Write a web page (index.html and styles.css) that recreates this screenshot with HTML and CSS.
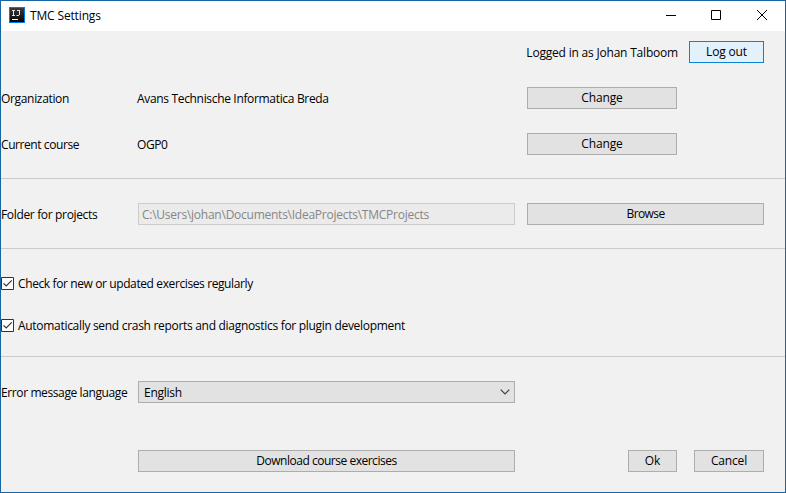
FILE: index.html
```
<!DOCTYPE html>
<html lang="en">
<head>
<meta charset="utf-8">
<title>TMC Settings</title>
<link rel="stylesheet" href="styles.css">
</head>
<body>
<div class="window">
  <header class="titlebar">
    <svg class="app-icon" width="16" height="16" viewBox="0 0 16 16">
      <defs><linearGradient id="g" x1="0" y1="0" x2="0" y2="1"><stop offset="0" stop-color="#3a3a3a"/><stop offset="1" stop-color="#050505"/></linearGradient></defs>
      <rect width="16" height="16" fill="#0878e0"/>
      <rect x="1" y="1" width="14" height="14" fill="url(#g)"/>
      <path d="M3 3.500h3M4.500 3v6M3 8.500h3M8 3.500h3M10.500 3v5M7.500 8.500h2.500" stroke="#e4e4e4" fill="none"/>
      <path d="M3 12.500h6" stroke="#fff"/>
    </svg>
    <h1 class="title"><span class="t-title">TMC Settings</span></h1>
    <div class="controls">
      <svg width="46" height="29" viewBox="0 0 46 29"><path d="M19 14.500h10" stroke="#000"/></svg>
      <svg width="46" height="29" viewBox="0 0 46 29"><path d="M18.500 9.500h9v9h-9z" stroke="#000" fill="none"/></svg>
      <svg width="46" height="29" viewBox="0 0 46 29"><path d="M18 9l10 10M28 9l-10 10" stroke="#000" fill="none"/></svg>
    </div>
  </header>
  <main class="content">
    <section class="account">
      <div class="session"><span class="t-session">Logged in as Johan Talboom</span><button class="button focused logout"><span class="t-logout">Log out</span></button></div>
      <div class="row"><span class="label"><span class="t-org">Organization</span></span><span class="value"><span class="t-avans">Avans Technische Informatica Breda</span></span><button class="button change"><span class="t-change">Change</span></button></div>
      <div class="row"><span class="label"><span class="t-course">Current course</span></span><span class="value"><span class="t-ogp">OGP0</span></span><button class="button change"><span class="t-change">Change</span></button></div>
    </section>
    <section class="folder">
      <div class="row"><span class="label"><span class="t-folder">Folder for projects</span></span><div class="field"><span class="t-path">C:\Users\johan\Documents\IdeaProjects\TMCProjects</span></div><button class="button browse"><span class="t-browse">Browse</span></button></div>
    </section>
    <section class="options">
      <label class="check"><svg width="13" height="13" viewBox="0 0 13 13"><path d="M.5.5h12v12H.5z" fill="#fff" stroke="#333"/><path d="M2.500 6.300l2.700 2.700L10.800 3.400" fill="none" stroke="#333" stroke-width="1.200"/></svg><span class="t-check">Check for new or updated exercises regularly</span></label>
      <label class="check"><svg width="13" height="13" viewBox="0 0 13 13"><path d="M.5.5h12v12H.5z" fill="#fff" stroke="#333"/><path d="M2.500 6.300l2.700 2.700L10.800 3.400" fill="none" stroke="#333" stroke-width="1.200"/></svg><span class="t-auto">Automatically send crash reports and diagnostics for plugin development</span></label>
    </section>
    <section class="bottom">
      <div class="row"><span class="label"><span class="t-error">Error message language</span></span><div class="combo"><span class="t-english">English</span><svg width="10" height="6" viewBox="0 0 10 6"><path d="M.7.7L5 5 9.300.7" fill="none" stroke="#404040" stroke-width="1.200"/></svg></div></div>
      <div class="actions"><button class="button download"><span class="t-download">Download course exercises</span></button><button class="button ok"><span class="t-ok">Ok</span></button><button class="button cancel"><span class="t-cancel">Cancel</span></button></div>
    </section>
  </main>
</div>
</body>
</html>
```
FILE: styles.css
```
* { box-sizing: border-box; }
body { margin: 0; font: 12px/22px "Open Sans", "Noto Sans", sans-serif; color: #000; }
.window { width: 786px; height: 493px; border: 1px solid #1765a3; background: #f1f1f1; overflow: hidden; }
.titlebar { display: flex; height: 30px; background: #fff; padding-left: 8px; }
.app-icon { margin-top: 6px; }
.title { margin: 4px 0 0 5px; font: inherit; white-space: nowrap; }
.controls { display: flex; margin-left: auto; }
.content { white-space: nowrap; }
.content > section { display: flex; flex-direction: column; }
.account { padding: 10px 0 23px; gap: 24px; }
.session { display: flex; justify-content: flex-end; gap: 11px; padding-right: 21px; height: 22px; }
.session > span { padding-top: 1px; }
.row { display: flex; height: 22px; }
.label { width: 137px; padding-top: 1px; flex: none; }
.value { width: 377px; margin-left: -1px; margin-right: 1px; padding-top: 1px; flex: none; }
.button { height: 22px; padding: 0; border: 1px solid #adadad; background: #e2e2e2; color: #000; font: inherit; line-height: 20px; text-align: center; }
.focused { border-color: #0a84d8; background: #e3f1fa; }
.logout { width: 75px; }
.change { width: 150px; margin-left: 12px; }
.browse { width: 237px; margin-left: 12px; }
.folder { border-top: 1px solid #cbcbcb; padding: 24px 0 23px; }
.field { width: 377px; border: 1px solid #cccccc; background: #ebebeb; color: #868686; padding-left: 3px; line-height: 22px; }
.options { border-top: 1px solid #cbcbcb; padding: 28px 0 24px; gap: 29px; }
.check { display: flex; align-items: center; gap: 4px; height: 13px; }
.bottom { border-top: 1px solid #cbcbcb; padding-top: 24px; gap: 47px; }
.combo { width: 377px; display: flex; align-items: center; justify-content: space-between; border: 1px solid #adadad; background: #e2e2e2; padding: 0 4px 0 5px; }
.combo span { padding-top: 2px; }
.actions { display: flex; padding-left: 137px; }
.download { width: 377px; }
.ok { width: 49px; margin-left: 113px; }
.cancel { width: 70px; margin-left: 17px; }

/* Tracking per string */
.t-title { letter-spacing: -0.15px; }
.t-session { letter-spacing: -0.2px; }
.t-org, .t-avans { letter-spacing: -0.33px; }
.t-course { letter-spacing: -0.42px; }
.t-ogp { letter-spacing: -0.4px; }
.t-folder { letter-spacing: -0.34px; }
.t-path { letter-spacing: -0.25px; }
.t-check { letter-spacing: -0.39px; }
.t-auto { letter-spacing: -0.3px; }
.t-error { letter-spacing: -0.39px; }
.t-english { letter-spacing: -0.25px; }
.t-download { letter-spacing: -0.48px; }
.t-browse { letter-spacing: -0.6px; }
.t-change, .t-logout, .t-cancel { letter-spacing: -0.15px; }
```
